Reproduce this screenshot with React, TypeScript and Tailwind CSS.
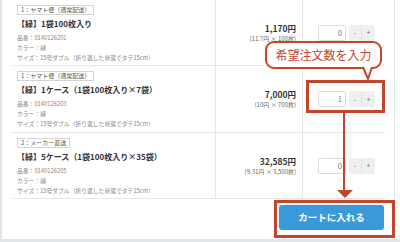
import React from 'react';

const font = { fontFamily: '"Noto Sans CJK JP", "Noto Sans", sans-serif' };

type Item = {
  ship: string;
  title: string;
  code: string;
  price: string;
  unit: string;
  qty: string;
  height: string;
};

const items: Item[] = [
  {
    ship: '1：ヤマト便（通常配送）',
    title: '【緑】1袋100枚入り',
    code: '0140126201',
    price: '1,170円',
    unit: '(11.7円 × 100枚)',
    qty: '0',
    height: 'h-[66px]',
  },
  {
    ship: '1：ヤマト便（通常配送）',
    title: '【緑】1ケース（1袋100枚入り×7袋）',
    code: '0140126203',
    price: '7,000円',
    unit: '(10円 × 700枚)',
    qty: '1',
    height: 'h-[67px]',
  },
  {
    ship: '2：メーカー直送',
    title: '【緑】5ケース（1袋100枚入り×35袋）',
    code: '0140126205',
    price: '32,585円',
    unit: '(9.31円 × 3,500枚)',
    qty: '0',
    height: 'h-[66px]',
  },
];

function Row({ item }: { item: Item }) {
  return (
    <div className={`flex ${item.height} border-b border-[#e6e6e6]`}>
      <div className="w-[203px] pl-[5px] pt-[5px] leading-none">
        <div className="flex h-[10px] w-fit items-center border border-[#d4d4d4] px-[3px] text-[6px] leading-none text-[#555]">
          {item.ship}
        </div>
        <div className="mt-[2px] h-[14px] text-[8px] font-bold leading-[14px] text-[#333]">
          {item.title}
        </div>
        <div className="mt-[2px] text-[5.8px] leading-[10px] text-[#888]">
          <div className="h-[10px]">品番：{item.code}</div>
          <div className="h-[10px]">カラー：緑</div>
          <div className="h-[10px]">サイズ：15号ダブル（折り返した状態でタテ15cm）</div>
        </div>
      </div>
      <div className="flex w-[87px] flex-col items-end justify-center border-l border-[#e6e6e6] pr-[6px]">
        <div className="text-[8.5px] font-bold leading-[11px] text-[#333]">{item.price}</div>
        <div className="text-[6px] leading-[9px] text-[#666]">{item.unit}</div>
      </div>
      <div className="flex w-[83px] items-center border-l border-[#e6e6e6] pl-[15px]">
        <div className="flex h-[16px] w-[28px] items-center justify-end rounded-[2px] border border-[#dcdcdc] pr-[3px] text-[7.5px] text-[#777]">
          {item.qty}
        </div>
        <div className="ml-[3px] flex h-[16px] overflow-hidden rounded-[2px] bg-[#efefef] text-[7px] leading-none text-[#777]">
          <div className="flex w-[13px] items-center justify-center border-r border-[#e2e2e2]">-</div>
          <div className="flex w-[13px] items-center justify-center">+</div>
        </div>
      </div>
    </div>
  );
}

export default function App() {
  const red = '#c3462c';
  return (
    <div className="relative h-[242px] w-[400px] overflow-hidden bg-[#e1e4e8]" style={font}>
      <div className="ml-[2px] h-[239px] w-[398px] bg-white">
        <div className="h-full w-[393px] border-r border-[#e1e4e8]">
          <div className="ml-[10px] w-[373px]">
            {items.map((it) => (
              <Row key={it.code} item={it} />
            ))}
          </div>
          <div className="mt-[6px] flex justify-end pr-[10px]">
            <button className="flex h-[25px] w-[105px] items-center justify-center rounded-[3px] bg-[#3a9ad9] text-[9.5px] font-bold text-white">
              カートに入れる
            </button>
          </div>
        </div>
      </div>

      {/* annotation overlays */}
      <div className="absolute left-[265px] top-[41px] flex h-[28px] w-[117px] items-center justify-center rounded-[9px] border-2 border-[#c3462c] bg-white text-[12px] leading-none text-[#c3462c]">
        希望注文数を入力
      </div>
      <svg className="absolute left-[360px] top-[66px]" width="16" height="16" viewBox="0 0 16 16">
        <polygon points="3,0 12,0 8,13" fill="#fff" />
        <polyline points="3,1 8,13 12,1" fill="none" stroke={red} strokeWidth="2" />
      </svg>
      <div className="absolute left-[306px] top-[80px] h-[33px] w-[79px] border-[3px] border-[#c3462c]" />
      <div className="absolute left-[343px] top-[113px] h-[78px] w-[2px] bg-[#c3462c]" />
      <svg className="absolute left-[337px] top-[190px]" width="16" height="9" viewBox="0 0 16 9">
        <polygon points="0,0 16,0 8,8" fill={red} />
      </svg>
      <div className="absolute left-[274px] top-[200px] h-[38px] w-[121px] border-[3px] border-[#c3462c]" />
    </div>
  );
}
